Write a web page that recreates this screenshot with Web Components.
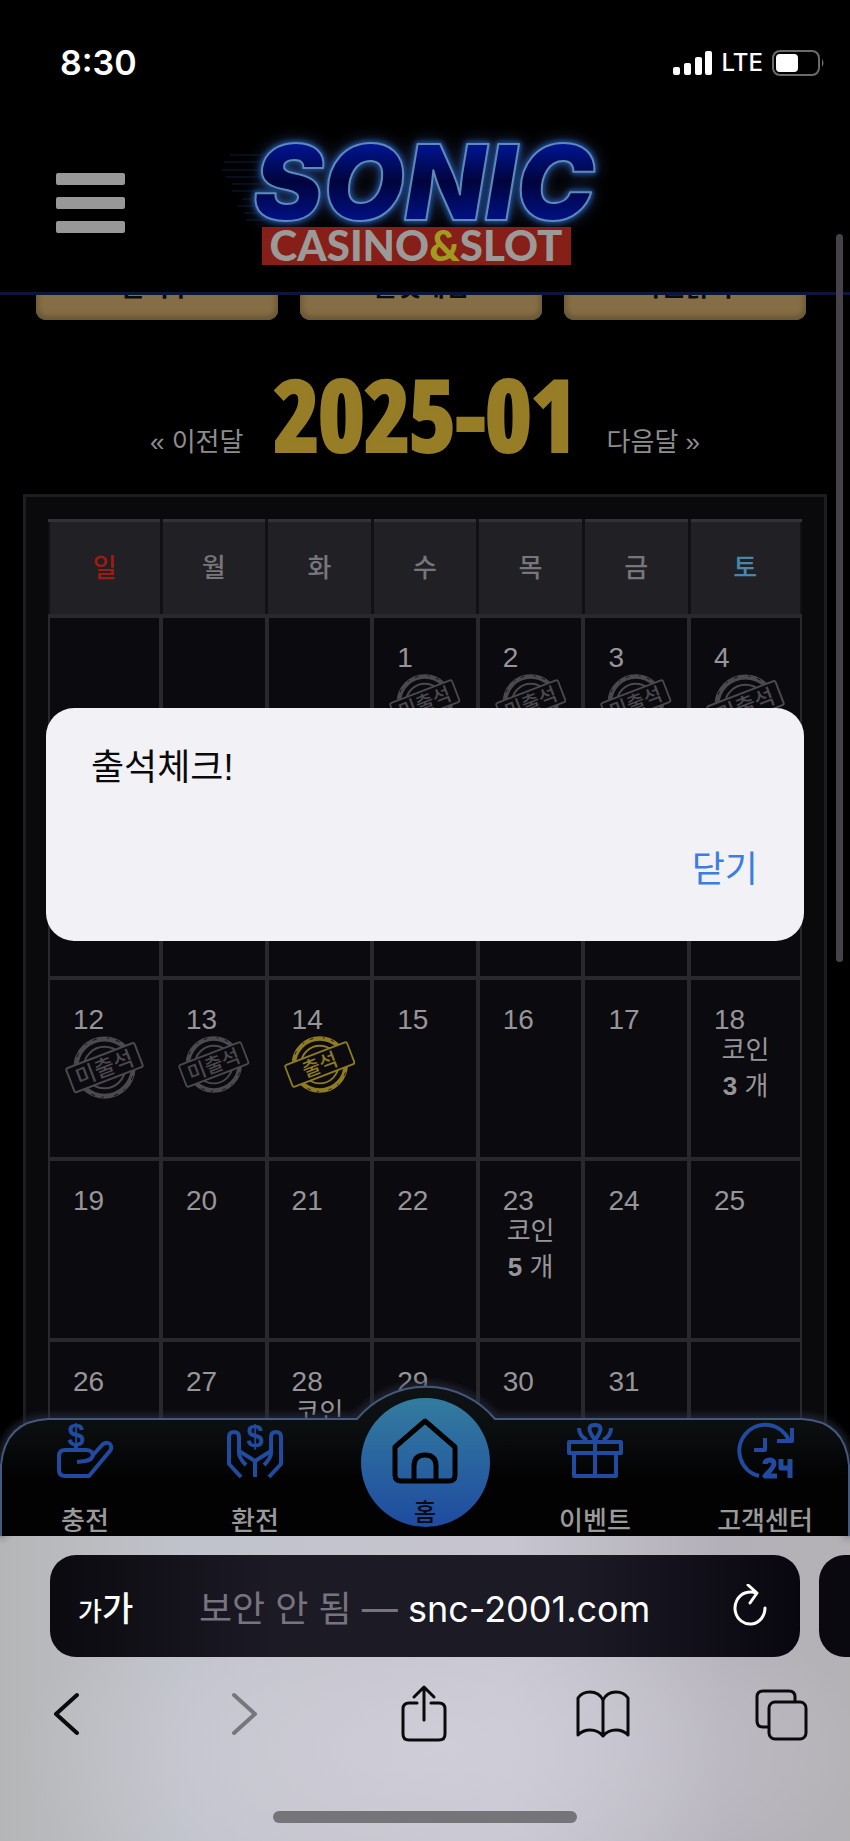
<!DOCTYPE html>
<html lang="ko">
<head>
<meta charset="UTF-8">
<meta name="viewport" content="width=device-width, initial-scale=1.0">
<title>출석체크</title>
<style>
    * { box-sizing: border-box; }

    body {
        --line: #29282d;
        --muted: #97959a;
        margin: 0;
        height: 100vh;
        display: flex;
        flex-direction: column;
        overflow: hidden;
        background: #000;
        color: var(--muted);
        font-family: "Liberation Sans", "Noto Sans CJK KR", sans-serif;
    }

    main {
        flex: 1;
        min-height: 0;
        position: relative;
        display: flex;
        flex-direction: column;
    }
</style>
</head>
<body>
    <status-bar time="8:30" network="LTE"></status-bar>
    <main>
        <site-header></site-header>
        <scroll-view>
            <tab-buttons>
                <tab-button>출석부</tab-button>
                <tab-button>룰렛게임</tab-button>
                <tab-button>복권긁기</tab-button>
            </tab-buttons>
            <month-nav month="2025-01"></month-nav>
            <attendance-calendar></attendance-calendar>
        </scroll-view>
        <bottom-nav>
            <nav-item icon="charge">충전</nav-item>
            <nav-item icon="exchange">환전</nav-item>
            <nav-item icon="home" home>홈</nav-item>
            <nav-item icon="gift">이벤트</nav-item>
            <nav-item icon="support">고객센터</nav-item>
        </bottom-nav>
        <alert-box>출석체크!</alert-box>
    </main>
    <browser-bar host="snc-2001.com"></browser-bar>

<script>
class StatusBar extends HTMLElement {
    constructor() {
        super();
        this.attachShadow({ mode: 'open' });
    }

    connectedCallback() {
        this.shadowRoot.innerHTML = `
            <style>
                :host {
                    display: flex;
                    align-items: center;
                    justify-content: space-between;
                    height: 113px;
                    padding: 12px 24px 0 60px;
                    color: #fff;
                    font-family: Inter, sans-serif;
                }
                .time { font-size: 34px; font-weight: 600; }
                .right { display: flex; align-items: center; gap: 9px; font-size: 24px; font-weight: 500; }
                svg { display: block; }
            </style>
            <span class="time">${this.getAttribute('time')}</span>
            <div class="right">
                <svg width="40" height="24" fill="#fff">
                    <rect x="0" y="16" width="7" height="8" rx="2"/>
                    <rect x="11" y="12" width="7" height="12" rx="2"/>
                    <rect x="22" y="6" width="7" height="18" rx="2"/>
                    <rect x="32" y="0" width="7" height="24" rx="2"/>
                </svg>
                <span>${this.getAttribute('network')}</span>
                <svg width="54" height="26">
                    <rect x="1" y="1" width="46" height="24" rx="7" fill="none" stroke="#6a6a6a" stroke-width="2"/>
                    <rect x="4" y="4" width="22" height="18" rx="4" fill="#fff"/>
                    <path d="M50 9q3 4 0 8z" fill="#6a6a6a"/>
                </svg>
            </div>
        `;
    }
}

class SiteHeader extends HTMLElement {
    constructor() {
        super();
        this.attachShadow({ mode: 'open' });
    }

    connectedCallback() {
        this.shadowRoot.innerHTML = `
            <style>
                :host {
                    position: relative;
                    z-index: 1;
                    flex: none;
                    display: grid;
                    grid-template-columns: 1fr auto 1fr;
                    align-items: center;
                    height: 182px;
                    padding: 0 56px;
                    box-sizing: border-box;
                    background: #000;
                    border-bottom: 3px solid #0c1638;
                }
                button {
                    justify-self: start;
                    display: grid;
                    gap: 12px;
                    width: 69px;
                    padding: 0;
                    border: 0;
                    background: none;
                }
                i { height: 12px; border-radius: 2px; background: #989898; }
                a, svg { display: block; }
                .name {
                    font: italic 900 105px Inter, sans-serif;
                    fill: url(#blue);
                    stroke: #5f8ab8;
                    stroke-width: 2px;
                    stroke-linejoin: round;
                    filter: drop-shadow(0 0 1px #1a4484) drop-shadow(0 0 2px #1a4484) drop-shadow(0 0 2px #173c78) drop-shadow(0 0 7px #1d2a4c);
                }
                .sub { font: 900 42px Lato, sans-serif; fill: #9c9a98; }
            </style>
            <button type="button" aria-label="메뉴"><i></i><i></i><i></i></button>
            <a href="#">
                <svg width="390" height="150" viewBox="20 -2 390 150" overflow="visible">
                    <defs>
                        <linearGradient id="blue" x1="0" y1="0" x2="0" y2="1">
                            <stop offset=".2" stop-color="#001593"/>
                            <stop offset=".5" stop-color="#00043c"/>
                            <stop offset=".8" stop-color="#001082"/>
                        </linearGradient>
                    </defs>
                    <path d="M20 25H60M14 32H60M12 40H60M16 47H60M22 54H60M22 61H60M32 69H56M28 76H56M34 83H56M36 90H56" stroke="#15306a" stroke-width="1" opacity=".6"/>
                    <text class="name" x="214" y="90" text-anchor="middle">SONIC</text>
                    <rect x="52" y="97" width="309" height="38" fill="#861f18"/>
                    <text class="sub" x="206" y="131" text-anchor="middle">CASINO<tspan fill="#a39a20">&amp;</tspan>SLOT</text>
                </svg>
            </a>
        `;
    }
}

class ScrollView extends HTMLElement {
    constructor() {
        super();
        this.attachShadow({ mode: 'open' });
    }

    connectedCallback() {
        this.shadowRoot.innerHTML = `
            <style>
                :host {
                    flex: 1;
                    min-height: 0;
                    position: relative;
                    display: block;
                    overflow: hidden;
                    padding: 0 23px;
                }
                .content { margin-top: -52px; }
            </style>
            <div class="content"><slot></slot></div>
        `;
    }
}

class TabButtons extends HTMLElement {
    constructor() {
        super();
        this.attachShadow({ mode: 'open' });
    }

    connectedCallback() {
        this.shadowRoot.innerHTML = `
            <style>
                :host {
                    display: grid;
                    grid-template-columns: repeat(3, 1fr);
                    gap: 22px;
                    padding: 0 21px 0 13px;
                }
            </style>
            <slot></slot>
        `;
    }
}

class TabButton extends HTMLElement {
    constructor() {
        super();
        this.attachShadow({ mode: 'open' });
    }

    connectedCallback() {
        this.shadowRoot.innerHTML = `
            <style>
                :host { display: block; }
                button {
                    width: 100%;
                    height: 77px;
                    padding: 6px 0 0;
                    border: 0;
                    border-radius: 10px;
                    background: #856d45;
                    box-shadow: inset 0 -4px 5px #6a5736, inset 3px 0 4px #77623e, inset -3px 0 4px #77623e;
                    color: #0c0a0a;
                    font: 700 26px "Noto Sans CJK KR", sans-serif;
                }
            </style>
            <button type="button"><slot></slot></button>
        `;
    }
}

class MonthNav extends HTMLElement {
    constructor() {
        super();
        this.attachShadow({ mode: 'open' });
    }

    connectedCallback() {
        this.shadowRoot.innerHTML = `
            <style>
                :host {
                    display: flex;
                    justify-content: center;
                    align-items: baseline;
                    gap: 30px;
                    height: 174px;
                    padding-top: 37px;
                    box-sizing: border-box;
                }
                h1 {
                    margin: 0;
                    color: #967d26;
                    font: 700 98px/112px "Open Sans Condensed", "Liberation Sans", sans-serif;
                    -webkit-text-stroke: 4px #967d26;
                }
                a { color: #8d8d8f; font-size: 26px; text-decoration: none; }
            </style>
            <a href="#prev">« 이전달</a>
            <h1>${this.getAttribute('month')}</h1>
            <a href="#next">다음달 »</a>
        `;
    }
}

class AttendStamp extends HTMLElement {
    constructor() {
        super();
        this.attachShadow({ mode: 'open' });
    }

    connectedCallback() {
        this.shadowRoot.innerHTML = `
            <style>
                :host { display: block; padding: 3px 15px 0; color: #4b494e; }
                :host([checked]) { color: #8f7b22; }
                svg { display: block; width: 100%; }
            </style>
            <svg viewBox="0 0 80 66" fill="none" stroke="currentColor">
                <circle cx="40" cy="33" r="29" stroke-width="5"/>
                <circle cx="40" cy="33" r="30" stroke="#0b0a0e" stroke-width="1" stroke-dasharray="2 7 4 11"/>
                <circle cx="40" cy="33" r="21" stroke-width="2"/>
                <g transform="rotate(-21 40 33)">
                    <rect x="3" y="20" width="74" height="26" rx="2" fill="#0b0a0e" stroke-width="2"/>
                    <text x="40" y="41" text-anchor="middle" fill="currentColor" stroke="none" font-size="22" font-weight="500">${this.getAttribute('label')}</text>
                </g>
            </svg>
        `;
    }
}

class AttendanceCalendar extends HTMLElement {
    constructor() {
        super();
        this.attachShadow({ mode: 'open' });
    }

    cell(day) {
        const coins = { 18: 3, 23: 5, 28: 5 };
        if (day < 1 || day > 31) return '<td></td>';
        let extra = '';
        if (day < 14) extra = '<attend-stamp label="미출석"></attend-stamp>';
        if (day === 14) extra = '<attend-stamp label="출석" checked></attend-stamp>';
        if (coins[day]) extra = `<p>코인<br><b>${coins[day]}</b> 개</p>`;
        return `<td><span>${day}</span>${extra}</td>`;
    }

    connectedCallback() {
        const days = ['일', '월', '화', '수', '목', '금', '토'];
        let rows = '';
        // January 2025 starts on a Wednesday
        for (let start = -2; start <= 31; start += 7) {
            rows += `<tr>${days.map((d, i) => this.cell(start + i)).join('')}</tr>`;
        }
        this.shadowRoot.innerHTML = `
            <style>
                :host {
                    display: block;
                    padding: 22px;
                    border: 3px solid #1d1c20;
                    background: #0a090c;
                }
                table {
                    width: 100%;
                    table-layout: fixed;
                    border-collapse: collapse;
                }
                th, td { box-sizing: border-box; padding: 0; border: 4px solid var(--line); }
                col.edge { width: 112px; }
                th {
                    height: 95px;
                    padding-bottom: 4px;
                    border-width: 3px;
                    border-color: #323136 #111015 #29282d;
                    background: #212025;
                    color: #77767a;
                    font-size: 26px;
                    font-weight: 500;
                }
                th:first-child { color: #9c1c14; }
                th:last-child { color: #4a86a5; }
                td {
                    height: 181px;
                    padding-top: 28px;
                    background: #0b0a0e;
                    vertical-align: top;
                    font-size: 28px;
                }
                tr > :first-child { border-left-width: 2px; }
                tr > :last-child { border-right-width: 2px; }
                span { display: block; padding-left: 23px; line-height: 24px; }
                p { margin: 0; text-align: center; font-size: 26px; line-height: 36px; }
            </style>
            <table>
                <colgroup><col class="edge"><col span="5"><col class="edge"></colgroup>
                <thead><tr>${days.map((d) => `<th>${d}</th>`).join('')}</tr></thead>
                <tbody>${rows}</tbody>
            </table>
        `;
    }
}

class BottomNav extends HTMLElement {
    constructor() {
        super();
        this.attachShadow({ mode: 'open' });
    }

    connectedCallback() {
        this.shadowRoot.innerHTML = `
            <style>
                :host {
                    position: absolute;
                    inset: auto 0 0;
                    display: block;
                    height: 149px;
                }
                .shape { position: absolute; inset: 0; width: 100%; height: 100%; overflow: visible; }
                nav {
                    position: relative;
                    display: grid;
                    grid-template-columns: repeat(5, 1fr);
                    height: 100%;
                    overflow: hidden;
                }
            </style>
            <svg class="shape" viewBox="0 0 850 149" preserveAspectRatio="none">
                <defs>
                    <linearGradient id="bar" x1="0" y1="0" x2="0" y2="1">
                        <stop offset="0" stop-color="#0f1215"/>
                        <stop offset=".25" stop-color="#0c0f10"/>
                        <stop offset=".6" stop-color="#020203"/>
                    </linearGradient>
                    <filter id="soft" x="-5%" y="-20%" width="110%" height="140%"><feGaussianBlur stdDeviation="4"/></filter>
                </defs>
                <path d="M1 149V78Q5 34 48 32H357A90 90 0 0 1 495 32H802Q845 34 849 78V149" fill="none" stroke="#2c3242" stroke-width="6" filter="url(#soft)"/>
                <path d="M1 149V78Q5 34 48 32H357A90 90 0 0 1 495 32H802Q845 34 849 78V149" fill="url(#bar)" stroke="#43597f" stroke-width="2"/>
            </svg>
            <nav><slot></slot></nav>
        `;
    }
}

const navIcons = {
    charge: `<path d="M19 22v5M20 39L28 38Q35 37 36 32L45 22Q49 18 53 21Q56 25 52 29L32 53H8Q2 53 2 47V33Q2 27 8 27H29Q35 27 36 32"/>
        <text x="19" y="23" font-size="31" font-weight="700" text-anchor="middle" stroke="none">$</text>`,
    exchange: `<path d="M14 54L2 41V14Q2 9 7 9Q12 9 12 14V28L28 38V54M42 54L54 41V14Q54 9 49 9Q44 9 44 14V28L28 38M12 28Q11 34 19 42M44 28Q45 34 37 42"/>
        <text x="28" y="24" font-size="31" font-weight="700" text-anchor="middle" stroke="none">$</text>`,
    home: `<path d="M2 28L32 2L62 28V56Q62 62 56 62H8Q2 62 2 56zM21 62V47Q21 36 32 36Q43 36 43 47V62"/>`,
    gift: `<path d="M2 19H54V30H2zM7 30V53H49V30M28 19V53M28 17Q17 2 28 2Q39 2 28 17M12 5Q12 13 20 17M44 5Q44 13 36 17"/>`,
    support: `<path d="M22 53A26 26 0 1 1 52 17M55 5V18H40M28 15V27H17"/>
        <path stroke-width="5" d="M28 41Q28 37 33 37Q37 37 37 41Q37 44 28 53H40M44 36V45H53M53 36V55"/>`
};

class NavItem extends HTMLElement {
    constructor() {
        super();
        this.attachShadow({ mode: 'open' });
    }

    connectedCallback() {
        const home = this.hasAttribute('home');
        const size = home ? 64 : 56;
        this.shadowRoot.innerHTML = `
            <style>
                :host { display: flex; justify-content: center; }
                a {
                    display: flex;
                    flex-direction: column;
                    align-items: center;
                    gap: 24px;
                    padding-top: 36px;
                    color: #9a9a9a;
                    font-size: 26px;
                    font-weight: 500;
                    line-height: 36px;
                    text-decoration: none;
                    white-space: nowrap;
                }
                svg {
                    flex: none;
                    overflow: visible;
                    fill: none;
                    stroke: #214b9f;
                    stroke-width: 4;
                    stroke-linejoin: round;
                }
                text { fill: #214b9f; }
                :host([home]) a {
                    box-sizing: border-box;
                    gap: 12px;
                    width: 129px;
                    height: 129px;
                    margin-top: 11px;
                    padding-top: 21px;
                    border-radius: 50%;
                    background: linear-gradient(#337c9e, #1e4ba0);
                    color: #080c18;
                    font-size: 24px;
                }
                :host([home]) svg { stroke: #000; stroke-width: 5; }
            </style>
            <a href="#${this.getAttribute('icon')}">
                <svg width="${size}" height="${size}">${navIcons[this.getAttribute('icon')]}</svg>
                <slot></slot>
            </a>
        `;
    }
}

class AlertBox extends HTMLElement {
    constructor() {
        super();
        this.attachShadow({ mode: 'open' });
    }

    connectedCallback() {
        this.shadowRoot.innerHTML = `
            <style>
                :host {
                    position: absolute;
                    inset: 0;
                    z-index: 2;
                    display: flex;
                    align-items: center;
                    padding: 0 46px;
                }
                .box {
                    flex: 1;
                    display: flex;
                    flex-direction: column;
                    gap: 48px;
                    padding: 33px 46px 44px 45px;
                    border-radius: 28px;
                    background: #f2f1f6;
                    color: #0a0a0c;
                    font-size: 36px;
                    line-height: 54px;
                }
                p { margin: 0; }
                button {
                    align-self: flex-end;
                    padding: 0;
                    border: 0;
                    background: none;
                    color: #3a7ee0;
                    font: inherit;
                }
                .scrollbar {
                    position: absolute;
                    top: 121px;
                    right: 7px;
                    width: 7px;
                    height: 728px;
                    border-radius: 4px;
                    background: #454347;
                }
            </style>
            <div class="scrollbar"></div>
            <div class="box" role="alertdialog">
                <p><slot></slot></p>
                <button type="button">닫기</button>
            </div>
        `;
    }
}

class BrowserBar extends HTMLElement {
    constructor() {
        super();
        this.attachShadow({ mode: 'open' });
    }

    connectedCallback() {
        this.shadowRoot.innerHTML = `
            <style>
                :host {
                    flex: none;
                    display: block;
                    overflow: hidden;
                    padding: 19px 0 18px;
                    background:
                        radial-gradient(ellipse 50% 60% at 52% 70%, rgba(208, 206, 216, .9), transparent),
                        linear-gradient(90deg, #b5b6b7, #c0c3cb 22%, #c7c5cf 60%, #b3b0b9 85%, #b5b2b6);
                }
                .tabs { display: flex; gap: 19px; padding: 0 50px; }
                .url, .next { flex: 0 0 100%; box-sizing: border-box; height: 102px; border-radius: 26px; background: #0a090f; }
                .url {
                    display: flex;
                    align-items: center;
                    justify-content: space-between;
                    padding: 0 32px 0 28px;
                    background: linear-gradient(90deg, #0a0a0f, #1c1a25 30%, #1c1a25 70%, #08070f);
                    color: #fff;
                    font: 36px Inter, "Noto Sans CJK KR", sans-serif;
                }
                button { padding: 0; border: 0; background: none; color: inherit; font: inherit; }
                button svg { display: block; margin: 0 auto; }
                .size { font-size: 34px; font-weight: 500; }
                small { font-size: 26px; }
                .reload { padding-left: 16px; }
                .gray { color: #77747f; }
                svg { fill: none; stroke: currentColor; stroke-width: 3; stroke-linecap: round; stroke-linejoin: round; }
                .tools {
                    display: flex;
                    justify-content: space-between;
                    padding: 26px 41px 68px 39px;
                    color: #0a0a0c;
                }
                .tools button { width: 54px; }
                .tools [disabled] { color: #77767d; }
                .home {
                    width: 304px;
                    height: 12px;
                    margin: 0 auto;
                    border-radius: 6px;
                    background: #757478;
                }
            </style>
            <div class="tabs">
                <div class="url">
                    <button type="button" class="size"><small>가</small>가</button>
                    <span><span class="gray">보안 안 됨 —</span> ${this.getAttribute('host')}</span>
                    <button type="button" class="reload" aria-label="새로고침">
                        <svg width="36" height="44"><path d="M24 9Q19 7 13 9A15 16 0 1 0 33 24M16 1L25 9L18 19"/></svg>
                    </button>
                </div>
                <div class="next"></div>
            </div>
            <div class="tools">
                <button type="button" aria-label="뒤로"><svg width="26" height="60"><path d="M24 12L3 31L24 50" stroke-width="4"/></svg></button>
                <button type="button" aria-label="앞으로" disabled><svg width="26" height="60"><path d="M2 12L23 31L2 50" stroke-width="4"/></svg></button>
                <button type="button" aria-label="공유"><svg width="46" height="60"><path d="M16 20H8Q2 20 2 26V51Q2 57 8 57H38Q44 57 44 51V26Q44 20 38 20H30M23 37V4M13 14L23 4L33 14"/></svg></button>
                <button type="button" aria-label="책갈피"><svg width="54" height="60"><path d="M27 17Q23 9 14 9Q6 9 2 15V52Q7 47 14 47Q22 47 27 53Q32 47 40 47Q47 47 52 52V15Q48 9 40 9Q31 9 27 17V53"/></svg></button>
                <button type="button" aria-label="탭"><svg width="54" height="60"><path d="M13 44H8Q2 44 2 38V14Q2 8 8 8H34Q40 8 40 14V18"/><rect x="14" y="19" width="37" height="37" rx="6"/></svg></button>
            </div>
            <div class="home"></div>
        `;
    }
}

customElements.define('status-bar', StatusBar);
customElements.define('site-header', SiteHeader);
customElements.define('scroll-view', ScrollView);
customElements.define('tab-buttons', TabButtons);
customElements.define('tab-button', TabButton);
customElements.define('month-nav', MonthNav);
customElements.define('attend-stamp', AttendStamp);
customElements.define('attendance-calendar', AttendanceCalendar);
customElements.define('bottom-nav', BottomNav);
customElements.define('nav-item', NavItem);
customElements.define('alert-box', AlertBox);
customElements.define('browser-bar', BrowserBar);
</script>
</body>
</html>
